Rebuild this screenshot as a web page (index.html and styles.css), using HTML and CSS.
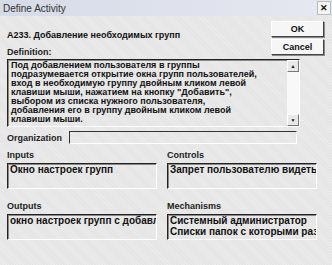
FILE: index.html
```html
<!DOCTYPE html>
<html lang="ru">
<head>
  <meta charset="UTF-8" />
  <link rel="stylesheet" href="styles.css">
</head>
<body>
  <div class="dialog">
    <div class="titlebar">
      <span class="title">Define Activity</span>
      <span class="close">&#x2715;</span>
    </div>

    <div class="content">
      <div class="head">
        <div class="head-left">
          <div class="name">A233. Добавление необходимых групп</div>
          <div class="label">Definition:</div>
        </div>
        <div class="buttons">
          <button class="btn">OK</button>
          <button class="btn">Cancel</button>
        </div>
      </div>

      <div class="definition">
        <div class="def-text">Под добавлением пользователя в группы<br>подразумевается открытие окна групп пользователей,<br>вход в необходимую группу двойным кликом левой<br>клавиши мыши, нажатием на кнопку "Добавить",<br>выбором из списка нужного пользователя,<br>добавления его в группу двойным кликом левой<br>клавиши мыши.</div>
        <div class="scrollbar">
          <span class="arrow">&#9650;</span>
          <span class="arrow">&#9660;</span>
        </div>
      </div>

      <div class="org-row">
        <span class="label">Organization</span>
        <div class="field"></div>
      </div>

      <div class="links">
        <div class="link">
          <div class="label">Inputs</div>
          <div class="box">Окно настроек групп</div>
        </div>
        <div class="link">
          <div class="label">Controls</div>
          <div class="box">Запрет пользователю видеть (изменять) чужие группы</div>
        </div>
        <div class="link">
          <div class="label">Outputs</div>
          <div class="box">окно настроек групп с добавленным пользователем</div>
        </div>
        <div class="link">
          <div class="label">Mechanisms</div>
          <div class="box">Системный администратор<br>Списки папок с которыми разрешено работать</div>
        </div>
      </div>
    </div>
  </div>
</body>
</html>
```

FILE: styles.css
```css
body {
  margin: 0;
  font-family: 'Liberation Sans', Arial, sans-serif;
  color: #111;
}

.dialog {
  width: 332px;
  height: 265px;
  background-color: #e4e4e4;
  background-image: repeating-linear-gradient(45deg, rgba(255, 255, 255, 0.25) 0 1px, transparent 1px 2px);
  overflow: hidden;
}

.titlebar {
  height: 16px;
  display: flex;
  align-items: center;
  justify-content: space-between;
  background: linear-gradient(90deg, #d6dbe8, #e6e8f0);
  padding-left: 3px;
}

.title {
  font-size: 10px;
  color: #333;
}

.close {
  width: 14px;
  height: 14px;
  margin-right: 1px;
  background: #f4f4f4;
  border: 1px solid #bbb;
  box-sizing: border-box;
  font-size: 9px;
  font-weight: 700;
  line-height: 12px;
  text-align: center;
}

.content {
  padding: 0 7px;
}

.head {
  display: flex;
  justify-content: space-between;
  height: 43px;
}

.name {
  font-size: 9px;
  font-weight: 700;
  margin-top: 14px;
}

.label {
  font-size: 9px;
  font-weight: 700;
  color: #222;
}

.head-left .label {
  margin-top: 7px;
}

.buttons {
  display: flex;
  flex-direction: column;
  gap: 2px;
  margin-top: 5px;
  margin-right: 1px;
}

.btn {
  width: 53px;
  height: 16px;
  padding: 0;
  font-family: inherit;
  font-size: 9px;
  font-weight: 700;
  color: #111;
  background: #f6f6f6;
  border: 1px solid;
  border-color: #fff #444 #444 #fff;
  box-shadow: 1px 1px 0 #888;
}

.definition {
  display: flex;
  width: 293px;
  height: 68px;
  box-sizing: border-box;
  border: 1px solid #222;
  border-right-color: #fff;
  border-bottom-color: #fff;
  box-shadow: inset 1px 1px 0 #888;
}

.def-text {
  flex: 1;
  padding: 1px 3px 0;
  font-size: 9px;
  font-weight: 700;
  line-height: 9px;
  white-space: nowrap;
  overflow: hidden;
}

.scrollbar {
  width: 12px;
  display: flex;
  flex-direction: column;
  justify-content: space-between;
  background: #f8f8f8;
}

.arrow {
  height: 10px;
  font-size: 5px;
  line-height: 10px;
  text-align: center;
  background: #e8e8e8;
  border: 1px solid;
  border-color: #fff #777 #777 #fff;
}

.org-row {
  display: flex;
  align-items: center;
  gap: 7px;
  margin-top: 4px;
}

.field {
  width: 228px;
  height: 13px;
  box-sizing: border-box;
  border: 1px solid #333;
  border-right-color: #fff;
  border-bottom-color: #fff;
}

.links {
  display: grid;
  grid-template-columns: 150px 150px;
  column-gap: 10px;
  row-gap: 12px;
  margin-top: 6px;
}

.link .label {
  margin-bottom: 3px;
}

.box {
  height: 26px;
  box-sizing: border-box;
  border: 1px solid #222;
  border-right-color: #fff;
  border-bottom-color: #fff;
  box-shadow: inset 1px 1px 0 #888;
  padding: 0 2px;
  font-size: 10px;
  font-weight: 700;
  line-height: 11px;
  white-space: nowrap;
  overflow: hidden;
}
```
